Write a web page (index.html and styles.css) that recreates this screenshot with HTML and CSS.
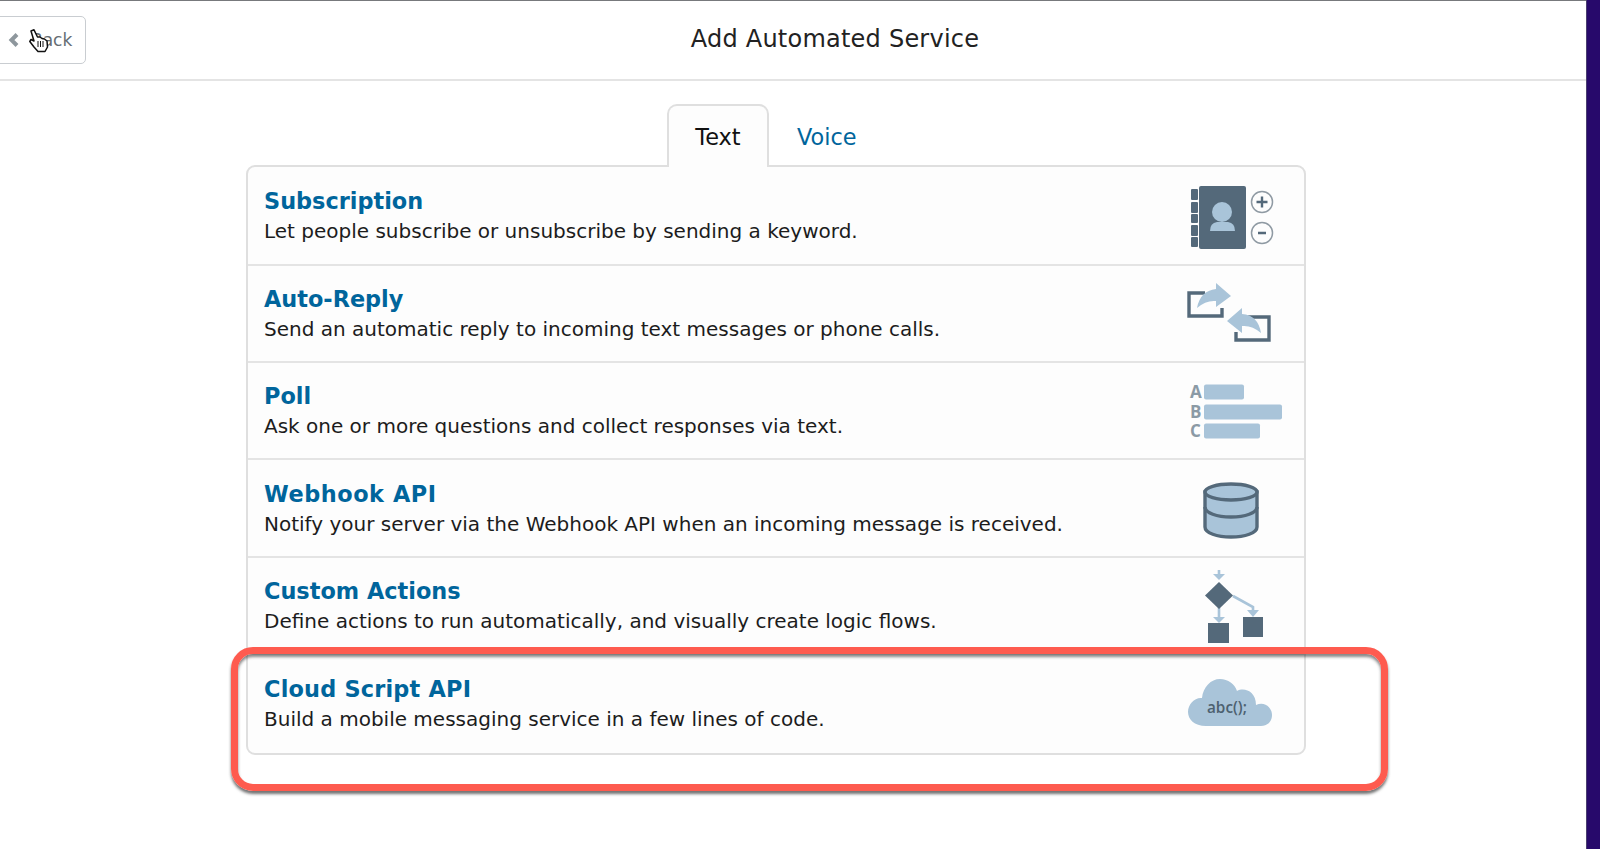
FILE: index.html
```html
<!DOCTYPE html>
<html lang="en">
<head>
  <meta charset="UTF-8">
  <title>Add Automated Service</title>
  <link rel="stylesheet" href="styles.css">
</head>
<body>

<div class="page">
  <div class="main">
    <div class="header">
      <a class="back-btn">
        <svg class="back-arrow" width="12" height="14" viewBox="0 0 12 14"><path d="M9 1.5 L3.5 7 L9 12.5" fill="none" stroke="#8e979d" stroke-width="4"/></svg>
        <span>Back</span>
      </a>
      <h1>Add Automated Service</h1>
    </div>

    <div class="tabs">
      <div class="tab active">Text</div>
      <div class="tab">Voice</div>
    </div>

    <div class="list">
      <div class="row first">
        <div class="row-text">
          <a class="row-title">Subscription</a>
          <div class="row-desc">Let people subscribe or unsubscribe by sending a keyword.</div>
        </div>
        <svg class="row-icon" width="100" height="72" viewBox="0 0 100 72">
          <g fill="#54697a">
            <rect x="5" y="9" width="7" height="11" rx="1"/>
            <rect x="5" y="22" width="7" height="11" rx="1"/>
            <rect x="5" y="34" width="7" height="9" rx="1"/>
            <rect x="5" y="45" width="7" height="11" rx="1"/>
            <rect x="5" y="57" width="7" height="10" rx="1"/>
            <rect x="13" y="6" width="47" height="63" rx="2"/>
          </g>
          <circle cx="36" cy="32" r="10" fill="#a9c4d9"/>
          <path d="M24 51 Q24 43 31 42 H42 Q49 43 49 51 Z" fill="#a9c4d9"/>
          <g fill="none" stroke="#8f9aa3" stroke-width="1.5">
            <circle cx="76" cy="22" r="10.5"/>
            <circle cx="76" cy="53" r="10.5"/>
          </g>
          <path d="M70.5 22 H81.5 M76 16.5 V27.5 M72 53 H80" stroke="#54697a" stroke-width="2.4" fill="none"/>
        </svg>
      </div>

      <div class="row">
        <div class="row-text">
          <a class="row-title">Auto-Reply</a>
          <div class="row-desc">Send an automatic reply to incoming text messages or phone calls.</div>
        </div>
        <svg class="row-icon" width="100" height="72" viewBox="0 0 100 72">
          <path d="M19 15 H3 V38 H36 V30" fill="none" stroke="#54697a" stroke-width="3.4"/>
          <path d="M62 39 H83 V62 H50 V54" fill="none" stroke="#54697a" stroke-width="3.4"/>
          <path d="M11 30 Q14 13 30 11 V5 L45 18 L30 29 V23 Q20 22 11 30 Z" fill="#a9c4d9"/>
          <path d="M75 55 Q72 37 56 36 V30 L41 43 L56 55 V48 Q66 47 75 55 Z" fill="#a9c4d9"/>
        </svg>
      </div>

      <div class="row">
        <div class="row-text">
          <a class="row-title">Poll</a>
          <div class="row-desc">Ask one or more questions and collect responses via text.</div>
        </div>
        <svg class="row-icon" width="100" height="72" viewBox="0 0 100 72">
          <g fill="#a9c4d9">
            <rect x="18" y="8.5" width="40" height="15" rx="2"/>
            <rect x="18" y="28.5" width="78" height="15" rx="2"/>
            <rect x="18" y="47.5" width="56" height="15" rx="2"/>
          </g>
          <g class="poll-letters">
            <text x="4" y="21.5">A</text>
            <text x="4" y="41.5">B</text>
            <text x="4" y="60.5">C</text>
          </g>
        </svg>
      </div>

      <div class="row">
        <div class="row-text">
          <a class="row-title wide">Webhook API</a>
          <div class="row-desc">Notify your server via the Webhook API when an incoming message is received.</div>
        </div>
        <svg class="row-icon" width="100" height="72" viewBox="0 0 100 72">
          <path d="M19 19 V54 C19 60 31 64 45 64 C59 64 71 60 71 54 V19 Z" fill="#a9c4d9" stroke="#54697a" stroke-width="3.4"/>
          <ellipse cx="45" cy="19" rx="26" ry="8" fill="#a9c4d9" stroke="#54697a" stroke-width="3.4"/>
          <path d="M19 34 C19 40 31 44 45 44 C59 44 71 40 71 34" fill="none" stroke="#54697a" stroke-width="3.4"/>
        </svg>
      </div>

      <div class="row">
        <div class="row-text">
          <a class="row-title">Custom Actions</a>
          <div class="row-desc">Define actions to run automatically, and visually create logic flows.</div>
        </div>
        <svg class="row-icon" width="100" height="84" viewBox="0 0 100 84">
          <g fill="none" stroke="#a9c4d9" stroke-width="2.6">
            <path d="M33 6 V12"/>
            <path d="M33 44 V55"/>
            <path d="M47 32 L67 43 V48"/>
          </g>
          <g fill="#a9c4d9">
            <path d="M27 10 H39 L33 16 Z"/>
            <path d="M27 53 H39 L33 59 Z"/>
            <path d="M61 46 H73 L67 53 Z"/>
          </g>
          <path d="M33 18 L47 31.5 L33 45 L19 31.5 Z" fill="#54697a"/>
          <rect x="22" y="59" width="21" height="20" fill="#54697a"/>
          <rect x="57" y="53" width="20" height="20" fill="#54697a"/>
        </svg>
      </div>

      <div class="row last">
        <div class="row-text">
          <a class="row-title semi-wide">Cloud Script API</a>
          <div class="row-desc">Build a mobile messaging service in a few lines of code.</div>
        </div>
        <svg class="row-icon" width="100" height="72" viewBox="0 0 100 72">
          <path d="M20 57 C8 57 2 50 2 43 C2 35 9 28 16 29 C17 18 25 10 34 10 C42 10 49 15 51 22 C58 18 70 22 70 36 C79 32 86 39 86 46 C86 53 81 57 75 57 Z" fill="#a9c4d9"/>
          <text class="cloud-text" x="21" y="43.5">abc();</text>
        </svg>
      </div>
    </div>

    <div class="callout"></div>
  </div>
  <div class="edge"></div>
</div>

<svg class="cursor" width="20" height="24" viewBox="0 0 20 24">
  <path d="M2 2 L5 .8 L8.5 8 L11 8 L13 9.5 L15.5 10 L18 12 L18.5 18 L16 22.5 L9 22.5 L5 18 L.8 12.5 L2 10.5 L5 12 Z" fill="#fff" stroke="#111" stroke-width="1.5" stroke-linejoin="round"/>
  <path d="M9 12 V18 M11.5 12 V18 M14 12 V18" stroke="#111" stroke-width="1"/>
</svg>

</body>
</html>
```

FILE: styles.css
```css
* {
  box-sizing: border-box;
}

body {
  margin: 0;
  background: #fff;
  font-family: "DejaVu Sans", Verdana, sans-serif;
  color: #1c1c1c;
}

.page {
  display: flex;
  height: 849px;
  overflow: hidden;
}

.main {
  position: relative;
  flex: 1;
  border-top: 1px solid #77797c;
}

.edge {
  width: 14px;
  background: #27096b;
  border-left: 1px solid #4a3f6e;
}

.header {
  position: relative;
  height: 80px;
  border-bottom: 2px solid #e4e4e4;
  display: flex;
  justify-content: center;
  align-items: center;
}

.header h1 {
  margin: 0 0 3px 84px;
  font-size: 24px;
  letter-spacing: 0.23px;
  font-weight: normal;
  color: #222;
}

.back-btn {
  position: absolute;
  left: -6px;
  top: 15px;
  width: 92px;
  height: 48px;
  border: 1px solid #c9cdd1;
  border-radius: 5px;
  display: flex;
  align-items: center;
  padding-left: 13px;
  font-size: 17px;
  color: #656d74;
}

.back-arrow {
  margin-right: 11px;
}

.tabs {
  display: flex;
  padding-left: 667px;
  margin-top: 23px;
  height: 61px;
  position: relative;
  z-index: 1;
}

.tab {
  font-size: 22.4px;
  color: #00659c;
  padding: 20px 28px 0;
}

.tab.active {
  width: 102px;
  height: 63px;
  padding: 18px 0 0;
  text-align: center;
  color: #111;
  background: #fdfdfd;
  border: 2px solid #dfdfdf;
  border-bottom: none;
  border-radius: 10px 10px 0 0;
}

.list {
  margin-left: 246px;
  width: 1060px;
  background: #fdfdfd;
  border: 2px solid #dfdfdf;
  border-radius: 9px;
}

.row {
  height: 97.4px;
  padding: 0 18px 0 16px;
  display: flex;
  justify-content: space-between;
  align-items: center;
  border-bottom: 2px solid #e4e4e4;
}

.row.first {
  height: 98.6px;
}

.row.last {
  border-bottom: none;
  height: 98px;
}

.row-text {
  align-self: flex-start;
  padding-top: 20.5px;
}

.row-title {
  display: block;
  font-size: 22.4px;
  font-weight: bold;
  color: #00659c;
  margin-bottom: 5px;
}

.row-title.wide {
  letter-spacing: 0.55px;
}

.row-title.semi-wide {
  letter-spacing: 0.2px;
}

.row-desc {
  font-size: 20px;
}

.row-icon {
  flex: none;
  margin-top: 2px;
}

.poll-letters {
  font-family: "Open Sans", sans-serif;
  font-size: 17px;
  font-weight: bold;
  fill: #8b9aa5;
}

.cloud-text {
  font-family: "Open Sans", sans-serif;
  font-size: 15.3px;
  font-weight: 600;
  fill: #4d6170;
}

.callout {
  position: absolute;
  left: 231px;
  top: 646px;
  width: 1157px;
  height: 144px;
  border: 7px solid #fe5b4f;
  border-radius: 22px;
  box-shadow: 0 3px 3px rgba(40, 40, 40, 0.65), inset 0 3px 3px rgba(40, 40, 40, 0.55);
}

.cursor {
  position: absolute;
  left: 29px;
  top: 29px;
}
```
